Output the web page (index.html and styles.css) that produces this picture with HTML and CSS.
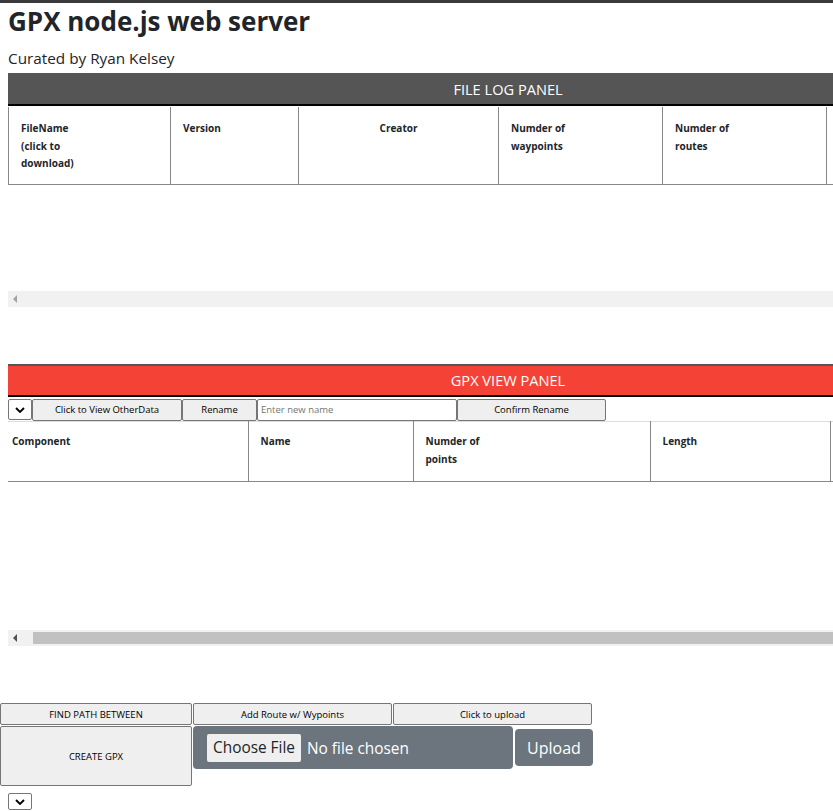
FILE: index.html
```html
<!DOCTYPE html>
<html lang="en">
<head>
<meta charset="utf-8">
<title>GPX node.js web server</title>
<link rel="stylesheet" href="styles.css">
</head>
<body>
<div class="topbar"></div>
<div class="page">
  <h1 class="title">GPX node.js web server</h1>
  <p class="subtitle">Curated by Ryan Kelsey</p>

  <section class="panel">
    <div class="panel-head dark">FILE LOG PANEL</div>
    <div class="scroll-area log-area">
      <table class="grid log-table">
        <colgroup>
          <col style="width:162px"><col style="width:128px"><col style="width:200px"><col style="width:164px"><col style="width:164px"><col style="width:182px">
        </colgroup>
        <thead>
          <tr>
            <th>FileName<br>(click to<br>download)</th>
            <th>Version</th>
            <th class="center">Creator</th>
            <th>Numder of<br>waypoints</th>
            <th>Numder of<br>routes</th>
            <th></th>
          </tr>
        </thead>
      </table>
    </div>
    <div class="hscroll"><span class="arrow light"></span></div>
  </section>

  <section class="panel gpx-panel">
    <div class="panel-head red">GPX VIEW PANEL</div>
    <div class="controls">
      <span class="select-wrap">
        <select class="mini-select"><option></option></select>
        <svg class="chev" width="10" height="6" viewBox="0 0 10 6"><path d="M1 1 L5 5 L9 1" fill="none" stroke="#000" stroke-width="1.8"/></svg>
      </span>
      <button class="btn w150">Click to View OtherData</button>
      <button class="btn w75">Rename</button>
      <input class="text-in" type="text" placeholder="Enter new name">
      <button class="btn w149">Confirm Rename</button>
    </div>
    <div class="scroll-area view-area">
      <table class="grid view-table">
        <colgroup>
          <col style="width:240px"><col style="width:165px"><col style="width:237px"><col style="width:180px"><col style="width:178px">
        </colgroup>
        <thead>
          <tr>
            <th>Component</th>
            <th>Name</th>
            <th>Numder of<br>points</th>
            <th>Length</th>
            <th></th>
          </tr>
        </thead>
      </table>
    </div>
    <div class="hscroll"><span class="arrow dark"></span><span class="thumb"></span></div>
  </section>
</div>

<div class="actions">
  <div class="action-row">
    <button class="btn wide">FIND PATH BETWEEN</button>
    <button class="btn wide">Add Route w/ Wypoints</button>
    <button class="btn wide">Click to upload</button>
  </div>
  <div class="action-row">
    <button class="btn wide tall">CREATE GPX</button>
    <div class="file-box"><input class="file-in" type="file"></div>
    <button class="upload">Upload</button>
  </div>
  <span class="select-wrap bottom-select">
    <select class="mini-select short"><option></option></select>
    <svg class="chev" width="10" height="6" viewBox="0 0 10 6"><path d="M1 1 L5 5 L9 1" fill="none" stroke="#000" stroke-width="1.8"/></svg>
  </span>
</div>
</body>
</html>
```

FILE: styles.css
```css
html, body {
  margin: 0;
  padding: 0;
  overflow: hidden;
  background: #fff;
}
body {
  font-family: "Open Sans", "Noto Sans", sans-serif;
  color: #212529;
  width: 833px;
  height: 811px;
}
.topbar {
  height: 3px;
  background: #3a3a3a;
}
.page {
  padding: 0 0 0 8px;
}
.title {
  margin: 0;
  font-size: 26px;
  font-weight: 700;
  line-height: 36px;
  padding-top: 0;
}
.subtitle {
  margin: 9px 0 0;
  font-size: 15.3px;
  line-height: 20px;
  font-weight: 400;
}
.panel {
  width: 1000px;
  margin-top: 5px;
}
.panel-head {
  height: 29px;
  line-height: 29px;
  border-top: 2px solid #555;
  border-bottom: 2px solid #000;
  color: #fff;
  text-align: center;
  font-size: 14.6px;
}
.panel-head.dark { background: #555; }
.panel-head.red { background: #f44336; }
.scroll-area {
  overflow: hidden;
}
.log-area { height: 184px; padding-top: 1px; }
.view-area { height: 209px; }
.grid {
  border-collapse: collapse;
  table-layout: fixed;
}
.grid th {
  font-size: 10px;
  font-weight: 700;
  text-align: left;
  vertical-align: top;
  line-height: 17.5px;
  border: 1px solid #888;
  border-top: none;
}
.log-table { width: 1000px; }
.log-table th {
  height: 77px;
  padding: 13px 12px 0;
  box-sizing: border-box;
}
.log-table th:first-child { border-left: 1px solid #888; }
.grid th.center { text-align: center; }
.view-table {
  width: 1000px;
}
.view-table th {
  height: 60px;
  box-sizing: border-box;
  padding: 11px 12px 0;
  border-top: 1px solid #ddd;
}
.view-table th:first-child {
  border-left: none;
  padding-left: 4px;
}
.hscroll {
  height: 16px;
  background: #f1f1f1;
  display: flex;
  align-items: center;
}
.arrow {
  width: 0;
  height: 0;
  border-top: 4px solid transparent;
  border-bottom: 4px solid transparent;
  border-right: 4px solid #a3a3a3;
  margin-left: 5px;
}
.arrow.dark { border-right-color: #505050; }
.thumb {
  height: 12px;
  background: #c1c1c1;
  margin-left: 16px;
  flex: 1;
}
.gpx-panel { margin-top: 57px; }
.controls {
  display: flex;
  align-items: center;
  height: 23px;
  padding-top: 1px;
}
.select-wrap {
  position: relative;
  display: inline-block;
  width: 24px;
  height: 21px;
}
.mini-select {
  appearance: none;
  -webkit-appearance: none;
  display: block;
  width: 24px;
  height: 21px;
  margin: 0;
  padding: 0;
  background: #fff;
  border: 1px solid #767676;
  border-radius: 2px;
  box-sizing: border-box;
}
.chev {
  position: absolute;
  left: 7px;
  top: 8px;
  pointer-events: none;
}
.btn {
  height: 22px;
  font-family: "Open Sans", "Noto Sans", sans-serif;
  font-size: 9.5px;
  color: #000;
  background: #efefef;
  border: 1px solid #767676;
  border-radius: 2px;
  padding: 0;
  box-sizing: border-box;
}
.w150 { width: 150px; }
.w75 { width: 75px; }
.w149 { width: 149px; }
.text-in {
  width: 200px;
  height: 22px;
  box-sizing: border-box;
  border: 1px solid #767676;
  border-radius: 2px;
  font-family: "Open Sans", "Noto Sans", sans-serif;
  font-size: 9.5px;
  padding: 0 3px;
}
.text-in::placeholder { color: #757575; }
.actions {
  padding-top: 57px;
}
.action-row {
  display: flex;
  align-items: flex-start;
  gap: 1px;
}
.btn.wide { width: 199px; }
.action-row .btn.wide:first-child { width: 192px; }
.btn.tall { height: 60px; margin-top: 1px; }
.file-box {
  width: 320px;
  height: 43px;
  margin-top: 1px;
  background: #6c757d;
  border-radius: 4px;
  display: flex;
  align-items: center;
  padding-left: 14px;
  box-sizing: border-box;
}
.file-in {
  color: #fff;
  font-family: "Open Sans", "Noto Sans", sans-serif;
  font-size: 15.4px;
}
.file-in::file-selector-button {
  font-family: "Open Sans", "Noto Sans", sans-serif;
  font-size: 15.4px;
  color: #212529;
  background: #efefef;
  border: none;
  border-radius: 2px;
  height: 28px;
  padding: 0 6px;
  margin-right: 6px;
}
.upload {
  margin: 4px 0 0 1px;
  width: 78px;
  height: 37px;
  background: #6c757d;
  color: #fff;
  border: none;
  border-radius: 4px;
  font-family: "Open Sans", "Noto Sans", sans-serif;
  font-size: 16px;
}
.bottom-select {
  margin: 7px 0 0 8px;
  height: 17px;
}
.mini-select.short { height: 17px; }
.bottom-select .chev { top: 6px; }
```
